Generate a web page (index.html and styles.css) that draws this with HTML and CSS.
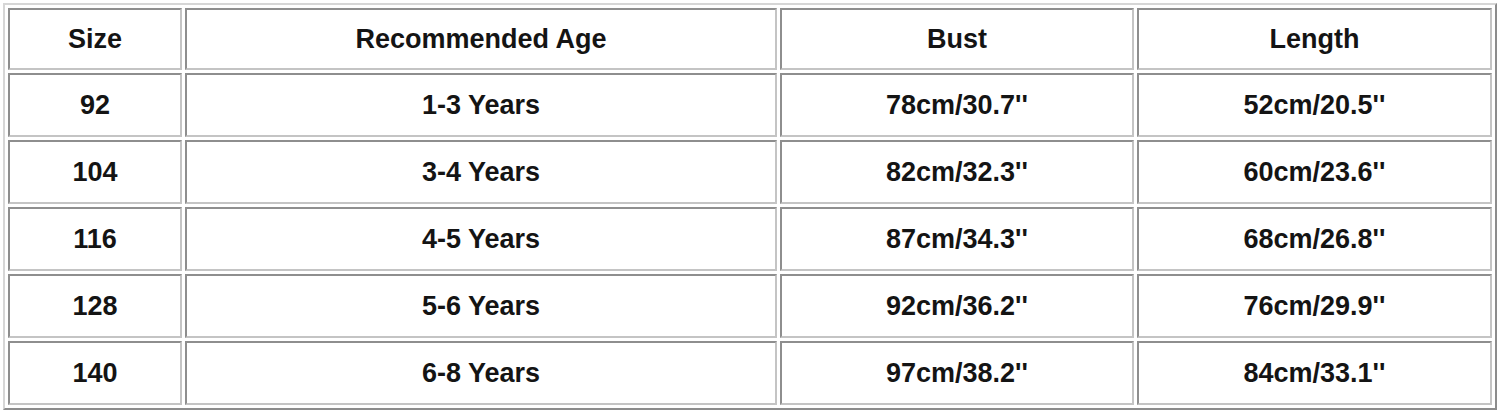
FILE: index.html
```html
<!DOCTYPE html>
<html lang="en">
<head>
<meta charset="utf-8">
<title>Size Chart</title>
<link rel="stylesheet" href="styles.css">
</head>
<body>
<table class="chart">
  <colgroup>
    <col class="c-size">
    <col class="c-age">
    <col class="c-bust">
    <col class="c-len">
  </colgroup>
  <tr class="head">
    <td>Size</td><td>Recommended Age</td><td>Bust</td><td>Length</td>
  </tr>
  <tr><td>92</td><td>1-3 Years</td><td>78cm/30.7''</td><td>52cm/20.5''</td></tr>
  <tr><td>104</td><td>3-4 Years</td><td>82cm/32.3''</td><td>60cm/23.6''</td></tr>
  <tr><td>116</td><td>4-5 Years</td><td>87cm/34.3''</td><td>68cm/26.8''</td></tr>
  <tr><td>128</td><td>5-6 Years</td><td>92cm/36.2''</td><td>76cm/29.9''</td></tr>
  <tr><td>140</td><td>6-8 Years</td><td>97cm/38.2''</td><td>84cm/33.1''</td></tr>
</table>
</body>
</html>
```

FILE: styles.css
```css
html, body {
  margin: 0;
  padding: 0;
  background: #ffffff;
}

body {
  padding: 3px;
  font-family: "Liberation Sans", Arial, sans-serif;
}

.chart {
  width: 1494px;
  table-layout: fixed;
  border-collapse: separate;
  border-spacing: 3px;
  border-style: solid;
  border-width: 2px;
  border-color: #d6d6d6 #8c8c8c #8c8c8c #d6d6d6;
  background: #ffffff;
}

.c-size { width: 174px; }
.c-age { width: 592px; }
.c-bust { width: 354px; }
.c-len { width: 355px; }

.chart td {
  box-sizing: border-box;
  height: 64px;
  padding: 0;
  border-style: solid;
  border-width: 2px;
  border-color: #8e8e8e #c4c4c4 #c4c4c4 #8e8e8e;
  text-align: center;
  vertical-align: middle;
  font-size: 27px;
  font-weight: bold;
  color: #141414;
}

.chart .head td {
  height: 62px;
}
```
